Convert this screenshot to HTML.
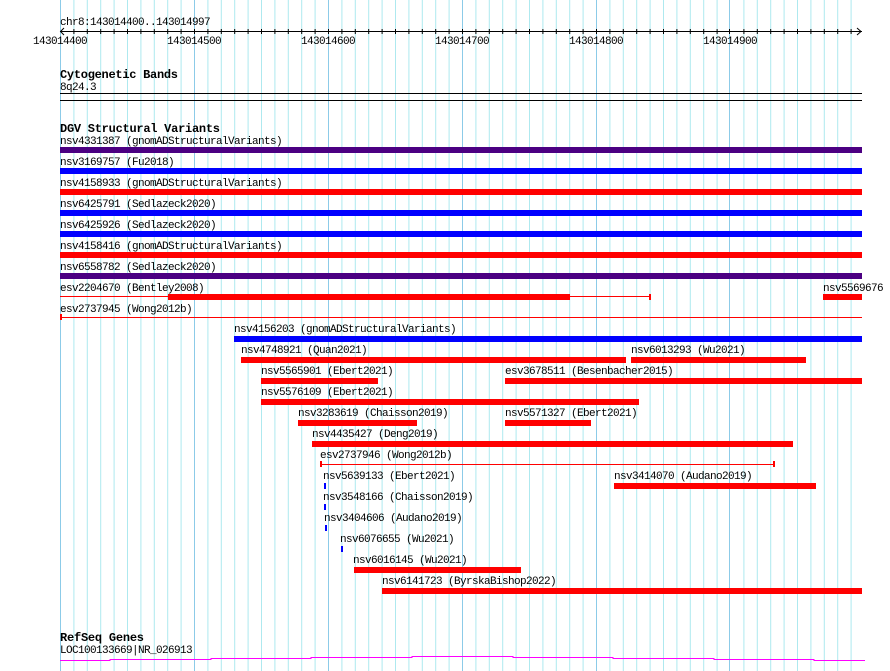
<!DOCTYPE html>
<html><head><meta charset="utf-8"><style>
html,body{margin:0;padding:0;background:#fff;width:890px;height:671px;overflow:hidden}
svg{display:block}
text{font-family:"Liberation Mono",monospace;font-size:11px;letter-spacing:-0.6px;fill:#000}
.b{font-weight:bold;font-size:12px;letter-spacing:0}
</style></head><body>
<svg width="890" height="671" xmlns="http://www.w3.org/2000/svg">
<g stroke="#aee9ef" stroke-width="1">
<line x1="73.9" y1="0" x2="73.9" y2="671"/><line x1="87.3" y1="0" x2="87.3" y2="671"/><line x1="100.7" y1="0" x2="100.7" y2="671"/><line x1="114.1" y1="0" x2="114.1" y2="671"/><line x1="127.5" y1="0" x2="127.5" y2="671"/><line x1="140.9" y1="0" x2="140.9" y2="671"/><line x1="154.3" y1="0" x2="154.3" y2="671"/><line x1="167.7" y1="0" x2="167.7" y2="671"/><line x1="181.1" y1="0" x2="181.1" y2="671"/>
<line x1="207.9" y1="0" x2="207.9" y2="671"/><line x1="221.3" y1="0" x2="221.3" y2="671"/><line x1="234.7" y1="0" x2="234.7" y2="671"/><line x1="248.1" y1="0" x2="248.1" y2="671"/><line x1="261.5" y1="0" x2="261.5" y2="671"/><line x1="274.9" y1="0" x2="274.9" y2="671"/><line x1="288.3" y1="0" x2="288.3" y2="671"/><line x1="301.7" y1="0" x2="301.7" y2="671"/><line x1="315.1" y1="0" x2="315.1" y2="671"/>
<line x1="341.9" y1="0" x2="341.9" y2="671"/><line x1="355.3" y1="0" x2="355.3" y2="671"/><line x1="368.7" y1="0" x2="368.7" y2="671"/><line x1="382.1" y1="0" x2="382.1" y2="671"/><line x1="395.5" y1="0" x2="395.5" y2="671"/><line x1="408.9" y1="0" x2="408.9" y2="671"/><line x1="422.3" y1="0" x2="422.3" y2="671"/><line x1="435.7" y1="0" x2="435.7" y2="671"/><line x1="449.1" y1="0" x2="449.1" y2="671"/>
<line x1="475.9" y1="0" x2="475.9" y2="671"/><line x1="489.3" y1="0" x2="489.3" y2="671"/><line x1="502.7" y1="0" x2="502.7" y2="671"/><line x1="516.1" y1="0" x2="516.1" y2="671"/><line x1="529.5" y1="0" x2="529.5" y2="671"/><line x1="542.9" y1="0" x2="542.9" y2="671"/><line x1="556.3" y1="0" x2="556.3" y2="671"/><line x1="569.7" y1="0" x2="569.7" y2="671"/><line x1="583.1" y1="0" x2="583.1" y2="671"/>
<line x1="609.9" y1="0" x2="609.9" y2="671"/><line x1="623.3" y1="0" x2="623.3" y2="671"/><line x1="636.7" y1="0" x2="636.7" y2="671"/><line x1="650.1" y1="0" x2="650.1" y2="671"/><line x1="663.5" y1="0" x2="663.5" y2="671"/><line x1="676.9" y1="0" x2="676.9" y2="671"/><line x1="690.3" y1="0" x2="690.3" y2="671"/><line x1="703.7" y1="0" x2="703.7" y2="671"/><line x1="717.1" y1="0" x2="717.1" y2="671"/>
<line x1="743.9" y1="0" x2="743.9" y2="671"/><line x1="757.3" y1="0" x2="757.3" y2="671"/><line x1="770.7" y1="0" x2="770.7" y2="671"/><line x1="784.1" y1="0" x2="784.1" y2="671"/><line x1="797.5" y1="0" x2="797.5" y2="671"/><line x1="810.9" y1="0" x2="810.9" y2="671"/><line x1="824.3" y1="0" x2="824.3" y2="671"/><line x1="837.7" y1="0" x2="837.7" y2="671"/><line x1="851.1" y1="0" x2="851.1" y2="671"/>
</g>
<g stroke="#8ccbe8" stroke-width="1">
<line x1="60.5" y1="0" x2="60.5" y2="671"/><line x1="194.5" y1="0" x2="194.5" y2="671"/><line x1="328.5" y1="0" x2="328.5" y2="671"/><line x1="462.5" y1="0" x2="462.5" y2="671"/><line x1="596.5" y1="0" x2="596.5" y2="671"/><line x1="729.5" y1="0" x2="729.5" y2="671"/>
</g>
<text x="60" y="25">chr8:143014400..143014997</text>
<g stroke="#000" stroke-width="1">
<line x1="60" y1="31.5" x2="862" y2="31.5"/>
<polyline points="64,28 60.5,31.5 64,35" fill="none"/>
<polyline points="857,28 861,31.5 857,35" fill="none"/>
</g>
<g stroke="#000" stroke-width="1">
<line x1="73.9" y1="29" x2="73.9" y2="34"/><line x1="87.3" y1="29" x2="87.3" y2="34"/><line x1="100.7" y1="29" x2="100.7" y2="34"/><line x1="114.1" y1="29" x2="114.1" y2="34"/><line x1="127.5" y1="29" x2="127.5" y2="34"/><line x1="140.9" y1="29" x2="140.9" y2="34"/><line x1="154.3" y1="29" x2="154.3" y2="34"/><line x1="167.7" y1="29" x2="167.7" y2="34"/><line x1="181.1" y1="29" x2="181.1" y2="34"/><line x1="194.5" y1="29" x2="194.5" y2="34"/>
<line x1="207.9" y1="29" x2="207.9" y2="34"/><line x1="221.3" y1="29" x2="221.3" y2="34"/><line x1="234.7" y1="29" x2="234.7" y2="34"/><line x1="248.1" y1="29" x2="248.1" y2="34"/><line x1="261.5" y1="29" x2="261.5" y2="34"/><line x1="274.9" y1="29" x2="274.9" y2="34"/><line x1="288.3" y1="29" x2="288.3" y2="34"/><line x1="301.7" y1="29" x2="301.7" y2="34"/><line x1="315.1" y1="29" x2="315.1" y2="34"/><line x1="328.5" y1="29" x2="328.5" y2="34"/>
<line x1="341.9" y1="29" x2="341.9" y2="34"/><line x1="355.3" y1="29" x2="355.3" y2="34"/><line x1="368.7" y1="29" x2="368.7" y2="34"/><line x1="382.1" y1="29" x2="382.1" y2="34"/><line x1="395.5" y1="29" x2="395.5" y2="34"/><line x1="408.9" y1="29" x2="408.9" y2="34"/><line x1="422.3" y1="29" x2="422.3" y2="34"/><line x1="435.7" y1="29" x2="435.7" y2="34"/><line x1="449.1" y1="29" x2="449.1" y2="34"/><line x1="462.5" y1="29" x2="462.5" y2="34"/>
<line x1="475.9" y1="29" x2="475.9" y2="34"/><line x1="489.3" y1="29" x2="489.3" y2="34"/><line x1="502.7" y1="29" x2="502.7" y2="34"/><line x1="516.1" y1="29" x2="516.1" y2="34"/><line x1="529.5" y1="29" x2="529.5" y2="34"/><line x1="542.9" y1="29" x2="542.9" y2="34"/><line x1="556.3" y1="29" x2="556.3" y2="34"/><line x1="569.7" y1="29" x2="569.7" y2="34"/><line x1="583.1" y1="29" x2="583.1" y2="34"/><line x1="596.5" y1="29" x2="596.5" y2="34"/>
<line x1="609.9" y1="29" x2="609.9" y2="34"/><line x1="623.3" y1="29" x2="623.3" y2="34"/><line x1="636.7" y1="29" x2="636.7" y2="34"/><line x1="650.1" y1="29" x2="650.1" y2="34"/><line x1="663.5" y1="29" x2="663.5" y2="34"/><line x1="676.9" y1="29" x2="676.9" y2="34"/><line x1="690.3" y1="29" x2="690.3" y2="34"/><line x1="703.7" y1="29" x2="703.7" y2="34"/><line x1="717.1" y1="29" x2="717.1" y2="34"/><line x1="729.5" y1="29" x2="729.5" y2="34"/>
<line x1="743.9" y1="29" x2="743.9" y2="34"/><line x1="757.3" y1="29" x2="757.3" y2="34"/><line x1="770.7" y1="29" x2="770.7" y2="34"/><line x1="784.1" y1="29" x2="784.1" y2="34"/><line x1="797.5" y1="29" x2="797.5" y2="34"/><line x1="810.9" y1="29" x2="810.9" y2="34"/><line x1="824.3" y1="29" x2="824.3" y2="34"/><line x1="837.7" y1="29" x2="837.7" y2="34"/><line x1="851.1" y1="29" x2="851.1" y2="34"/>
</g>
<g text-anchor="middle">
<text x="60" y="44">143014400</text><text x="194" y="44">143014500</text><text x="328" y="44">143014600</text><text x="462" y="44">143014700</text><text x="596" y="44">143014800</text><text x="730" y="44">143014900</text>
</g>
<text class="b" x="60" y="78" textLength="118">Cytogenetic Bands</text>
<text x="60" y="90">8q24.3</text>
<rect x="60" y="93" width="802" height="1" fill="#000"/>
<rect x="60" y="100" width="802" height="1" fill="#000"/>
<text class="b" x="60" y="132" textLength="160">DGV Structural Variants</text>
<text x="60" y="144">nsv4331387 (gnomADStructuralVariants)</text>
<rect x="60" y="147" width="802" height="6" fill="#4b0082"/>
<text x="60" y="165">nsv3169757 (Fu2018)</text>
<rect x="60" y="168" width="802" height="6" fill="#0000ff"/>
<text x="60" y="186">nsv4158933 (gnomADStructuralVariants)</text>
<rect x="60" y="189" width="802" height="6" fill="#ff0000"/>
<text x="60" y="207">nsv6425791 (Sedlazeck2020)</text>
<rect x="60" y="210" width="802" height="6" fill="#0000ff"/>
<text x="60" y="228">nsv6425926 (Sedlazeck2020)</text>
<rect x="60" y="231" width="802" height="6" fill="#0000ff"/>
<text x="60" y="249">nsv4158416 (gnomADStructuralVariants)</text>
<rect x="60" y="252" width="802" height="6" fill="#ff0000"/>
<text x="60" y="270">nsv6558782 (Sedlazeck2020)</text>
<rect x="60" y="273" width="802" height="6" fill="#4b0082"/>
<text x="60" y="291">esv2204670 (Bentley2008)</text>
<rect x="60" y="296" width="590" height="1" fill="#ff0000"/>
<rect x="168" y="294" width="402" height="6" fill="#ff0000"/>
<rect x="649" y="294" width="2" height="6" fill="#ff0000"/>
<text x="823" y="291">nsv5569676</text>
<rect x="823" y="294" width="39" height="6" fill="#ff0000"/>
<text x="60" y="312">esv2737945 (Wong2012b)</text>
<rect x="60" y="317" width="802" height="1" fill="#ff0000"/>
<rect x="60" y="314" width="2" height="6" fill="#ff0000"/>
<text x="234" y="332">nsv4156203 (gnomADStructuralVariants)</text>
<rect x="234" y="336" width="628" height="6" fill="#0000ff"/>
<text x="241" y="353">nsv4748921 (Quan2021)</text>
<rect x="241" y="357" width="385" height="6" fill="#ff0000"/>
<text x="631" y="353">nsv6013293 (Wu2021)</text>
<rect x="631" y="357" width="175" height="6" fill="#ff0000"/>
<text x="261" y="374">nsv5565901 (Ebert2021)</text>
<rect x="261" y="378" width="117" height="6" fill="#ff0000"/>
<text x="505" y="374">esv3678511 (Besenbacher2015)</text>
<rect x="505" y="378" width="357" height="6" fill="#ff0000"/>
<text x="261" y="395">nsv5576109 (Ebert2021)</text>
<rect x="261" y="399" width="378" height="6" fill="#ff0000"/>
<text x="298" y="416">nsv3283619 (Chaisson2019)</text>
<rect x="298" y="420" width="119" height="6" fill="#ff0000"/>
<text x="505" y="416">nsv5571327 (Ebert2021)</text>
<rect x="505" y="420" width="86" height="6" fill="#ff0000"/>
<text x="312" y="437">nsv4435427 (Deng2019)</text>
<rect x="312" y="441" width="481" height="6" fill="#ff0000"/>
<text x="320" y="458">esv2737946 (Wong2012b)</text>
<rect x="320" y="464" width="454" height="1" fill="#ff0000"/>
<rect x="320" y="461" width="2" height="6" fill="#ff0000"/>
<rect x="773" y="461" width="2" height="6" fill="#ff0000"/>
<text x="323" y="479">nsv5639133 (Ebert2021)</text>
<rect x="324" y="483" width="2" height="6" fill="#0000ff"/>
<text x="614" y="479">nsv3414070 (Audano2019)</text>
<rect x="614" y="483" width="202" height="6" fill="#ff0000"/>
<text x="323" y="500">nsv3548166 (Chaisson2019)</text>
<rect x="324" y="504" width="2" height="6" fill="#0000ff"/>
<text x="324" y="521">nsv3404606 (Audano2019)</text>
<rect x="325" y="525" width="2" height="6" fill="#0000ff"/>
<text x="340" y="542">nsv6076655 (Wu2021)</text>
<rect x="341" y="546" width="2" height="6" fill="#0000ff"/>
<text x="353" y="563">nsv6016145 (Wu2021)</text>
<rect x="354" y="567" width="167" height="6" fill="#ff0000"/>
<text x="382" y="584">nsv6141723 (ByrskaBishop2022)</text>
<rect x="382" y="588" width="480" height="6" fill="#ff0000"/>
<text class="b" x="60" y="641" textLength="84">RefSeq Genes</text>
<text x="60" y="653">LOC100133669|NR_026913</text>
<polyline fill="none" stroke="#ff00ff" stroke-width="1" points="60,660.5 110,660.5 110,659.5 211,659.5 211,658.5 311,658.5 311,657.5 412,657.5 412,656.5 513,656.5 513,657.5 613,657.5 613,658.5 714,658.5 714,659.5 814,659.5 814,660.5 865,660.5"/>
</svg>
</body></html>
